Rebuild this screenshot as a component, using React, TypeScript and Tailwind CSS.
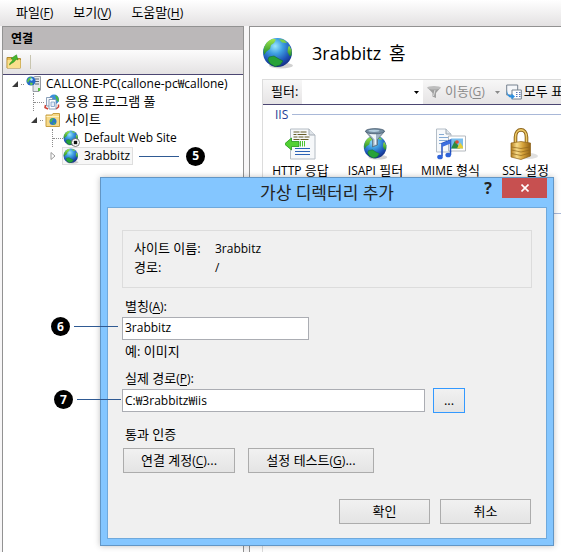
import type { ReactNode } from "react";

function Key({ children }: { children: string }) {
  return (
    <span className="text-xs">
      (<span className="underline underline-offset-2">{children}</span>)
    </span>
  );
}

function Globe({ className }: { className: string }) {
  return (
    <svg viewBox="0 0 32 32" className={className} aria-hidden="true">
      <defs>
        <radialGradient id="sea" cx="42%" cy="28%" r="75%">
          <stop offset="0" stopColor="#9be6fb" />
          <stop offset="0.35" stopColor="#3fa0e2" />
          <stop offset="0.75" stopColor="#1d4fb4" />
          <stop offset="1" stopColor="#142a7c" />
        </radialGradient>
        <linearGradient id="land" x1="0" y1="0" x2="0" y2="1">
          <stop offset="0" stopColor="#a2e84a" />
          <stop offset="1" stopColor="#1c8a2c" />
        </linearGradient>
      </defs>
      <ellipse cx="19" cy="28.5" rx="12" ry="3" fill="#000" opacity="0.18" />
      <circle cx="15.5" cy="15.5" r="14.5" fill="url(#sea)" />
      <path d="M1.5 14C2 8 5.500 3.500 11 1.800L14 2.500 12 6 9 8 8 12 4.500 14.500 2 18Z" fill="url(#land)" />
      <path d="M17 2.200 22 2.800 25 6 20 5.500Z" fill="#7cd04a" />
      <path d="M27 8.500 29.700 13 29.500 18.500 27.500 19 25.500 15 26 11Z" fill="url(#land)" />
      <path d="M7 20 12 19 17 22 21 24 18 28 13 29.500 8 26.500 6 23Z" fill="#27a238" stroke="#146e2a" strokeWidth="0.6" />
    </svg>
  );
}

function ServerIcon() {
  return (
    <svg viewBox="0 0 16 16" className="size-4" aria-hidden="true">
      <path d="M7 1.500 9 .5h5.500V14L13 15.500H7Z" fill="#e4e7ea" stroke="#80878f" strokeWidth="0.8" />
      <path d="M9 3h4M9 5.500h4M9 8h4" stroke="#5b6770" />
      <path d="M12 12h2v3h-2z" fill="#58c33a" />
      <circle cx="5" cy="5" r="4.600" fill="#2469c9" />
      <path d="M1 5C2 2 4 .8 5.500 1L5 3 3 5 2 7ZM4 6.500l3 .5-1 2-1.500.3Z" fill="#5fc844" />
      <circle cx="5.500" cy="3.500" r="1.200" fill="#b8efff" />
    </svg>
  );
}

function PoolIcon() {
  return (
    <svg viewBox="0 0 16 16" className="size-4" aria-hidden="true">
      <circle cx="10" cy="5.500" r="5" fill="#3b8fdd" />
      <path d="M11 1c3 1 4.500 4 3.500 7l-2-2Z" fill="#4cb83f" />
      <path d="M1.500 11 1 13.500 4 15M14.500 10.500V13L12 15" fill="none" stroke="#cf4034" strokeWidth="1.500" />
      <path d="M2.500 3.500h6V12h-6z" fill="#f5f8fc" stroke="#7089a8" strokeWidth="0.8" />
      <path d="M5 5.500h7V15H5z" fill="#fff" stroke="#7089a8" strokeWidth="0.8" />
      <path d="M7 8h3.500v4.500H7z" fill="#e6eef8" stroke="#7b9cc7" strokeWidth="0.8" />
    </svg>
  );
}

function SitesIcon() {
  return (
    <svg viewBox="0 0 16 16" className="size-4" aria-hidden="true">
      <path d="M1 3h6l1-1.500h6.500v13H1Z" fill="#f6d987" stroke="#c79f42" />
      <path d="M1.500 4.500h12.500" stroke="#fff2c2" />
      <circle cx="8" cy="9.500" r="3.500" fill="#2a76c8" />
      <path d="M5 9c.5-2 2-3 3.500-2.500L7 9l-1 2ZM8 10.500l2.500.5-1.500 1.800Z" fill="#51bd3f" />
    </svg>
  );
}

function StoppedSiteIcon() {
  return (
    <span className="relative block size-4">
      <Globe className="size-4" />
      <svg viewBox="0 0 9 9" className="absolute -right-px -bottom-px size-[9px]" aria-hidden="true">
        <circle cx="4.500" cy="4.500" r="4" fill="#fff" stroke="#555" strokeWidth="0.8" />
        <path d="M2.800 2.800h3.400v3.400H2.800z" fill="#111" />
      </svg>
    </span>
  );
}

function ConnectIcon() {
  return (
    <svg viewBox="0 0 16 16" className="size-4" aria-hidden="true">
      <path d="M1 3.500h5l1 1h7.500V14H1Z" fill="#e9bd55" stroke="#b08a30" />
      <path d="M1.500 6h13v8h-13z" fill="#fbe08d" />
      <path d="M3.500 11C3.500 8.500 6 8 7 5.500L5 4.500 10.500.8 12 6 10 5C9 8.500 6 8.500 3.500 11Z" fill="#47b62d" stroke="#278217" strokeWidth="0.5" />
    </svg>
  );
}

function FunnelIcon() {
  return (
    <svg viewBox="0 0 14 14" className="size-3.5" aria-hidden="true">
      <path d="M.3 2.500h13.400L9 8v5L5.500 11.500V8Z" fill="#9f9f9f" />
      <ellipse cx="7" cy="2.700" rx="6.700" ry="1.700" fill="#bdbdbd" />
      <path d="M8 5 6.500 11" stroke="#ddd" />
    </svg>
  );
}

function ShowAllIcon() {
  return (
    <svg viewBox="0 0 16 16" className="size-4" aria-hidden="true">
      <path d="M.7 1h11v10h-11z" fill="#f5f7fa" stroke="#76828f" />
      <path d="M6 6h9.300v9H6z" fill="#fff" stroke="#76828f" />
      <path d="M10 8.500h1.500M13 8.500h1.500M10 10.500h1.500M13 10.500h1.500M10 12.500h1.500M13 12.500h1.500" stroke="#5573b5" />
      <path d="M1 6c0 4 2 5.500 4.500 5.500V9.500L9 12.500l-3.500 3v-2C2 13.500 0 10 1 6Z" fill="#2c8fe0" />
    </svg>
  );
}

function HttpIcon() {
  return (
    <svg viewBox="0 0 32 32" className="size-8" aria-hidden="true">
      <path d="M5.500 1H24l6 6v24H5.500Z" fill="#f6f8fa" stroke="#b4bcc4" />
      <path d="M24 1v6h6" fill="#dfe4e9" stroke="#a5adb5" />
      <path d="M8.500 4h6m1 0h6M8.500 6.500h3m1 0h9M8.500 9h4m1 0h5m1 0h5M8.500 11.500h6m1 0h8" stroke="#665c28" />
      <path d="M10 20.500h15M10 23.500h15M10 26.500h15" stroke="#2b62b5" />
      <path d="M-.5 16 6.500 10v3.500H14v5H6.500V22Z" fill="#52d033" stroke="#219718" strokeWidth="0.8" />
      <path d="M15.500 13v5.500M17.500 13v5.500M19.500 13v5.500" stroke="#4ac52f" />
    </svg>
  );
}

function IsapiIcon() {
  return (
    <span className="relative block size-8">
      <Globe className="absolute bottom-0 left-[3px] size-[25px]" />
      <svg viewBox="0 0 32 32" className="absolute inset-0 size-8" aria-hidden="true">
        <path d="M5.500 3.500 12.500 11.500V19l5-2v-5.500L24.500 3.500Z" fill="#9fb4c5" stroke="#4c6071" strokeWidth="0.700" />
        <path d="M9.500 6 14.500 11.500V17l1.500-.6V6Z" fill="#eef5f9" />
        <ellipse cx="15" cy="3.200" rx="9.500" ry="2.600" fill="#748da1" stroke="#405568" strokeWidth="0.700" />
        <ellipse cx="14" cy="2.800" rx="5.500" ry="1.100" fill="#b3cddd" />
      </svg>
    </span>
  );
}

function MimeIcon() {
  return (
    <svg viewBox="0 0 32 32" className="size-8" aria-hidden="true">
      <path d="M1.500 1H11l5 5v18H1.500Z" fill="#f7f9fb" stroke="#b3bdc7" />
      <path d="M11 1v5h5" fill="#dfe5eb" stroke="#9aa6b2" />
      <path d="M4 6.500h5M4 9.500h9M4 12.500h8M4 15.500h5" stroke="#84aad4" />
      <path d="M13.500 8h17v15h-17z" fill="#fff" stroke="#b4b9bf" />
      <path d="M16 10.500h12v10H16z" fill="#79bdec" />
      <path d="M16 20.500l4-8 5 8Z" fill="#2e8b3e" />
      <path d="M22 20.500l3-6 3 4v2Z" fill="#e5cf38" />
      <circle cx="22" cy="14" r="1.800" fill="#e24b32" />
      <path d="M7 28V15.500L15.500 12v15" fill="none" stroke="#2450bd" strokeWidth="1.500" />
      <path d="M7 15.500 15.500 12v3.500L7 19Z" fill="#3c6fe0" />
      <ellipse cx="5" cy="29" rx="2.800" ry="2.300" fill="#2e63d9" />
      <ellipse cx="13.200" cy="27" rx="2.800" ry="2.300" fill="#2e63d9" />
    </svg>
  );
}

function LockIcon() {
  return (
    <svg viewBox="0 0 32 32" className="size-8" aria-hidden="true">
      <defs>
        <linearGradient id="brass">
          <stop offset="0" stopColor="#b27b1d" />
          <stop offset="0.3" stopColor="#f8dc88" />
          <stop offset="0.6" stopColor="#d6a33b" />
          <stop offset="1" stopColor="#916115" />
        </linearGradient>
      </defs>
      <ellipse cx="19" cy="28" rx="9" ry="3" fill="#000" opacity="0.12" />
      <path d="M5.500 16V9c0-9.500 11-9.500 11 0v7" fill="none" stroke="#8d6318" strokeWidth="3.600" />
      <path d="M5.500 16V9c0-9.500 11-9.500 11 0v7" fill="none" stroke="#edca68" strokeWidth="1.600" />
      <path d="M1 15 11 13.500 20.500 15v13L11 31.500 1 29Z" fill="url(#brass)" stroke="#8d6118" strokeWidth="0.700" />
      <path d="M1.500 19 11 20.500 20 19M1.500 22 11 24 20 22M1.500 25.500 11 27.500 20 25" fill="none" stroke="#8f651d" strokeWidth="0.700" />
    </svg>
  );
}

function Expander({ open }: { open: boolean }) {
  return (
    <svg viewBox="0 0 8 8" className="size-2 shrink-0" aria-hidden="true">
      {open ? (
        <path d="M7 1v6H1Z" fill="#3a3a3a" />
      ) : (
        <path d="M2 .5 6 4 2 7.500Z" fill="#fff" stroke="#9a9a9a" />
      )}
    </svg>
  );
}

function Dots({ className }: { className: string }) {
  return <span className={`border-dotted border-[#8c8c8c] ${className}`} />;
}

function DropArrow({ className }: { className: string }) {
  return (
    <svg viewBox="0 0 5 3" className={`h-[3px] w-[5px] ${className}`} aria-hidden="true">
      <path d="M0 0h5L2.500 3Z" fill="currentColor" />
    </svg>
  );
}

function Badge({ children }: { children: string }) {
  return (
    <span className="flex size-[19px] items-center justify-center rounded-full bg-black text-xs font-bold text-white">
      {children}
    </span>
  );
}

function Callout({ label, className }: { label: string; className: string }) {
  return (
    <div className={`absolute flex items-center gap-1 ${className}`}>
      <Badge>{label}</Badge>
      <span className="h-px w-11 bg-[#2f5a93]" />
    </div>
  );
}

function Feature({ icon, children }: { icon: ReactNode; children: ReactNode }) {
  return (
    <li className="flex w-[75px] shrink-0 flex-col items-center">
      {icon}
      <span className="leading-5 whitespace-nowrap">{children}</span>
    </li>
  );
}

function PushButton({ className, children }: { className: string; children: ReactNode }) {
  return (
    <button
      type="button"
      className={`h-[25px] border bg-linear-to-b from-[#f1f1f1] to-[#e4e4e4] whitespace-nowrap ${className}`}
    >
      {children}
    </button>
  );
}

function Connections() {
  return (
    <aside className="flex w-[242px] shrink-0 flex-col border border-b-0 border-[#929292] bg-white">
      <h2 className="h-[23px] bg-[#bbb8b9] px-2 text-xs leading-[23px] font-semibold">연결</h2>
      <div className="flex h-[25px] items-center gap-2 border-b border-[#4b4672] bg-linear-to-b from-[#fcfcfc] to-[#e4e2e3] px-[3px]">
        <button type="button" aria-label="연결 만들기">
          <ConnectIcon />
        </button>
        <span className="h-3.5 w-px bg-[#c8c5b0]" />
      </div>
      <ul className="whitespace-nowrap [&_div]:flex [&_div]:h-[18px] [&_div]:items-center">
        <li>
          <div className="pl-2">
            <Expander open />
            <Dots className="mx-0.5 w-[3px] border-t" />
            <ServerIcon />
            <span className="ml-1 text-xs">CALLONE-PC(callone-pc₩callone)</span>
          </div>
          <ul>
            <li>
              <div className="pl-[30px]">
                <Dots className="h-full border-l" />
                <Dots className="w-2.5 border-t" />
                <PoolIcon />
                <span className="ml-[5px]">응용 프로그램 풀</span>
              </div>
            </li>
            <li>
              <div className="pl-[27px]">
                <Expander open />
                <Dots className="mx-0.5 w-[3px] border-t" />
                <SitesIcon />
                <span className="ml-1">사이트</span>
              </div>
              <ul>
                <li>
                  <div className="pl-[49px]">
                    <Dots className="h-full border-l" />
                    <Dots className="w-2.5 border-t" />
                    <StoppedSiteIcon />
                    <span className="ml-[5px] text-xs">Default Web Site</span>
                  </div>
                </li>
                <li>
                  <div className="pl-[46px]">
                    <Expander open={false} />
                    <span className="ml-[5px] flex h-[18px] items-center border border-[#dedede] bg-[#f7f7f7] pr-0.5 text-xs">
                      <Globe className="mr-[5px] size-4" />
                      3rabbitz
                    </span>
                    <span className="mr-[7px] ml-1.5 h-px w-10 bg-[#2f5a93]" />
                    <Badge>5</Badge>
                  </div>
                </li>
              </ul>
            </li>
          </ul>
        </li>
      </ul>
    </aside>
  );
}

function SiteHome() {
  return (
    <main className="flex min-w-0 flex-1 flex-col overflow-hidden border-t border-l border-[#929292] bg-white pl-3">
      <div className="flex h-[52px] items-center gap-[18px]">
        <Globe className="size-8" />
        <h1 className="flex gap-2 text-lg whitespace-nowrap">
          <span>3rabbitz</span>
          <span>홈</span>
        </h1>
      </div>
      <section className="flex-1 border-t border-l border-[#dcdcdc]">
        <div className="flex h-[25px] items-center overflow-hidden border-b border-[#4b4672] bg-linear-to-b from-[#f7f7f7] to-[#e6e4e5] whitespace-nowrap">
          <label htmlFor="filter" className="w-[39px] shrink-0 pl-2">
            필터:
          </label>
          <div className="relative flex h-full shrink-0 items-center">
            <select id="filter" className="h-full w-[121px] appearance-none bg-white">
              <option value="" />
            </select>
            <DropArrow className="absolute right-1" />
          </div>
          <button type="button" className="ml-1 flex shrink-0 items-center gap-1 text-[#8a8a8a]">
            <FunnelIcon />
            <span>
              이동
              <Key>G</Key>
            </span>
          </button>
          <DropArrow className="mr-1.5 ml-2.5 shrink-0 text-[#8a8a8a]" />
          <button type="button" className="flex shrink-0 items-center gap-0.5">
            <ShowAllIcon />
            모두 표
          </button>
        </div>
        <div className="flex h-[19px] items-center gap-1 pl-3">
          <h2 className="text-xs text-[#1e3c96]">IIS</h2>
          <span className="h-px flex-1 bg-[#a9b8d8]" />
        </div>
        <ul className="mt-1 flex">
          <Feature icon={<HttpIcon />}>
            <span className="text-xs">HTTP</span> 응답
          </Feature>
          <Feature icon={<IsapiIcon />}>
            <span className="text-xs">ISAPI</span> 필터
          </Feature>
          <Feature icon={<MimeIcon />}>
            <span className="text-xs">MIME</span> 형식
          </Feature>
          <Feature icon={<LockIcon />}>
            <span className="text-xs">SSL</span> 설정
          </Feature>
        </ul>
        <hr className="mt-[33px] border-[#a9b8d8]" />
      </section>
    </main>
  );
}

function AddDirectoryDialog() {
  return (
    <div
      role="dialog"
      aria-labelledby="dialog-title"
      className="absolute top-[177px] left-[100px] w-[454px] border border-[#6296c5] bg-[#84c6ff] px-1.5 pb-1.5 shadow-[0_0_6px_rgba(0,0,0,0.25)]"
    >
      <header className="relative flex h-[29px] items-center justify-center text-[#222]">
        <h2 id="dialog-title" className="text-[17px]">
          가상 디렉터리 추가
        </h2>
        <div className="absolute top-0 right-0 flex">
          <button type="button" aria-label="도움말" className="w-7 text-base leading-5 font-bold">
            ?
          </button>
          <button
            type="button"
            aria-label="닫기"
            className="flex h-5 w-[45px] items-center justify-center bg-[#c75050]"
          >
            <svg viewBox="0 0 8 8" className="size-2" aria-hidden="true">
              <path d="M.5.5l7 7M7.500.5l-7 7" stroke="#fff" strokeWidth="1.600" />
            </svg>
          </button>
        </div>
      </header>
      <form className="border border-[#6fa9dc] bg-[#f0f0f0] px-3.5 pt-[22px] pb-3.5">
        <dl className="grid h-[58px] grid-cols-[81px_1fr] content-center border border-[#dcdcdc] pb-0.5 pl-[11px] leading-[19px]">
          <dt>사이트 이름:</dt>
          <dd className="text-xs leading-[19px]">3rabbitz</dd>
          <dt>경로:</dt>
          <dd className="text-xs leading-[19px]">/</dd>
        </dl>
        <label htmlFor="alias" className="mt-2 block pl-[3px] leading-5">
          별칭
          <Key>A</Key>:
        </label>
        <input
          id="alias"
          defaultValue="3rabbitz"
          className="mt-px block h-[23px] w-[187px] border border-[#abadb3] bg-white px-0.5 pb-0.5 text-xs"
        />
        <p className="pl-[3px] leading-[22px]">예: 이미지</p>
        <label htmlFor="path" className="mt-1.5 block pl-[3px] leading-5">
          실제 경로
          <Key>P</Key>:
        </label>
        <div className="flex items-center gap-2">
          <input
            id="path"
            defaultValue="C:₩3rabbitz₩iis"
            className="h-[23px] w-[303px] border border-[#abadb3] bg-white px-0.5 pb-0.5 text-xs"
          />
          <PushButton className="w-8 border-[#3399ff]">...</PushButton>
        </div>
        <p className="mt-[11px] pl-[3px] leading-5">통과 인증</p>
        <div className="mt-1 flex gap-[13px] pl-px">
          <PushButton className="w-28 border-[#acacac]">
            연결 계정
            <Key>C</Key>...
          </PushButton>
          <PushButton className="w-[126px] border-[#acacac]">
            설정 테스트
            <Key>G</Key>...
          </PushButton>
        </div>
        <div className="mt-[26px] flex justify-end gap-2.5 pr-px">
          <PushButton className="w-[91px] border-[#acacac]">확인</PushButton>
          <PushButton className="w-[91px] border-[#acacac]">취소</PushButton>
        </div>
      </form>
      <Callout label="6" className="top-[139px] -left-[50px]" />
      <Callout label="7" className="top-[212px] -left-[47px]" />
    </div>
  );
}

export default function App() {
  return (
    <div className="relative flex min-h-screen flex-col overflow-hidden bg-[#f7f6f7] font-['Open_Sans','Noto_Sans_CJK_KR',sans-serif] text-[13px] text-black">
      <nav className="flex h-[26px] items-center gap-5 bg-linear-to-b from-white to-[#e3e1e2] px-4 whitespace-nowrap">
        <button type="button">
          파일
          <Key>F</Key>
        </button>
        <button type="button">
          보기
          <Key>V</Key>
        </button>
        <button type="button">
          도움말
          <Key>H</Key>
        </button>
      </nav>
      <div className="flex flex-1 gap-[5px] pl-0.5">
        <Connections />
        <SiteHome />
      </div>
      <AddDirectoryDialog />
    </div>
  );
}
